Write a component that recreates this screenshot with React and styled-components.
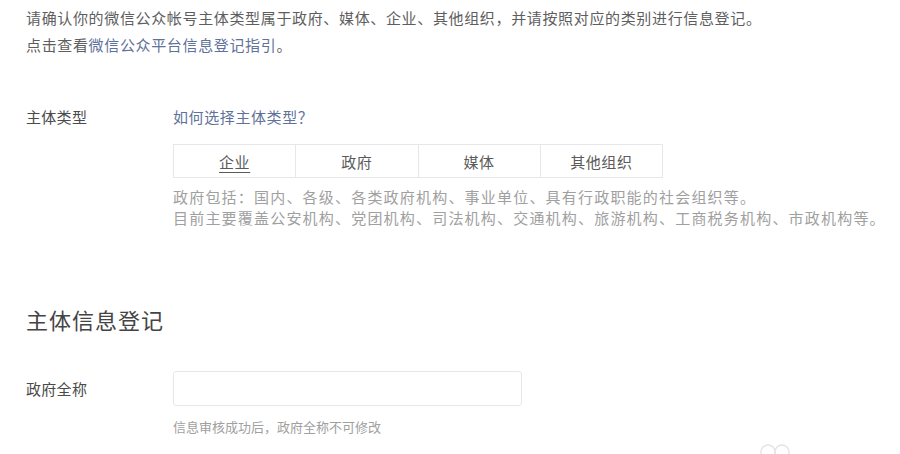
import React from "react";
import styled, { createGlobalStyle } from "styled-components";

const Global = createGlobalStyle`
  html, body { margin: 0; padding: 0; background: #fff; }
  body { font-family: "Noto Sans CJK SC", "Microsoft YaHei", sans-serif; color: #444; }
`;

const Page = styled.div`
  width: 900px;
  height: 454px;
  box-sizing: border-box;
  padding: 4px 0 0 26px;
  position: relative;
  overflow: hidden;
`;

const Intro = styled.p`
  margin: 0;
  font-size: 15px;
  letter-spacing: 0.65px;
  line-height: 27px;
  color: #5e5e5e;
`;

const Link = styled.a`
  color: #5f7299;
  text-decoration: none;
`;

const Row = styled.div`
  display: flex;
  align-items: ${(p) => (p.$center ? "center" : "flex-start")};
  margin-top: ${(p) => p.$mt}px;
`;

const Label = styled.div`
  width: 147px;
  flex: none;
  font-size: 15px;
  letter-spacing: 0.3px;
  line-height: 24px;
  color: #4a4a4a;
`;

const Field = styled.div`
  display: flex;
  flex-direction: column;
`;

const HelpLink = styled(Link)`
  font-size: 15px;
  letter-spacing: 0.6px;
  line-height: 24px;
`;

const Segments = styled.div`
  display: flex;
  margin-top: 15px;
  width: 490px;
  height: 34px;
  box-sizing: border-box;
  border: 1px solid #e7e7eb;
`;

const Segment = styled.div`
  flex: 1;
  display: flex;
  align-items: center;
  justify-content: center;
  font-size: 15px;
  letter-spacing: 0.6px;
  color: #5a5a5a;
  text-decoration: ${(p) => (p.$active ? "underline" : "none")};
  text-underline-offset: 4px;
  & + & { border-left: 1px solid #e7e7eb; }
`;

const Desc = styled.p`
  margin: ${(p) => p.$mt || 0}px 0 0;
  font-size: ${(p) => (p.$small ? 13 : 15)}px;
  letter-spacing: ${(p) => (p.$small ? 0 : 1.2)}px;
  line-height: 21px;
  color: #a0a0a0;
  white-space: nowrap;
`;

const Heading = styled.h2`
  margin: 76px 0 0;
  font-size: 22px;
  font-weight: 400;
  line-height: 30px;
  letter-spacing: 1px;
  color: #444;
`;

const Input = styled.input`
  width: 349px;
  height: 35px;
  box-sizing: border-box;
  border: 1px solid #e7e7eb;
  border-radius: 3px;
  outline: none;
  padding: 0 10px;
  font-size: 14px;
  background: #fff;
`;

const Watermark = styled.svg`
  position: absolute;
  left: 756px;
  top: 440px;
`;

export default function App() {
  return (
    <>
      <Global />
      <Page>
        <Intro>
          请确认你的微信公众帐号主体类型属于政府、媒体、企业、其他组织，并请按照对应的类别进行信息登记。
          <br />
          点击查看<Link href="#">微信公众平台信息登记指引</Link>。
        </Intro>

        <Row $mt={47}>
          <Label>主体类型</Label>
          <Field>
            <HelpLink href="#">如何选择主体类型？</HelpLink>
            <Segments>
              <Segment $active>企业</Segment>
              <Segment>政府</Segment>
              <Segment>媒体</Segment>
              <Segment>其他组织</Segment>
            </Segments>
            <Desc $mt={8}>政府包括：国内、各级、各类政府机构、事业单位、具有行政职能的社会组织等。</Desc>
            <Desc>目前主要覆盖公安机构、党团机构、司法机构、交通机构、旅游机构、工商税务机构、市政机构等。</Desc>
          </Field>
        </Row>

        <Heading>主体信息登记</Heading>

        <Row $mt={37} $center>
          <Label>政府全称</Label>
          <Input />
        </Row>
        <Row $mt={10}>
          <Label />
          <Desc $small>信息审核成功后，政府全称不可修改</Desc>
        </Row>

        <Watermark width="40" height="20" viewBox="0 0 40 20">
          <circle cx="12" cy="12" r="7" fill="none" stroke="#e4e4e4" strokeWidth="1.5" />
          <circle cx="26" cy="12" r="7" fill="none" stroke="#e4e4e4" strokeWidth="1.5" />
        </Watermark>
      </Page>
    </>
  );
}
